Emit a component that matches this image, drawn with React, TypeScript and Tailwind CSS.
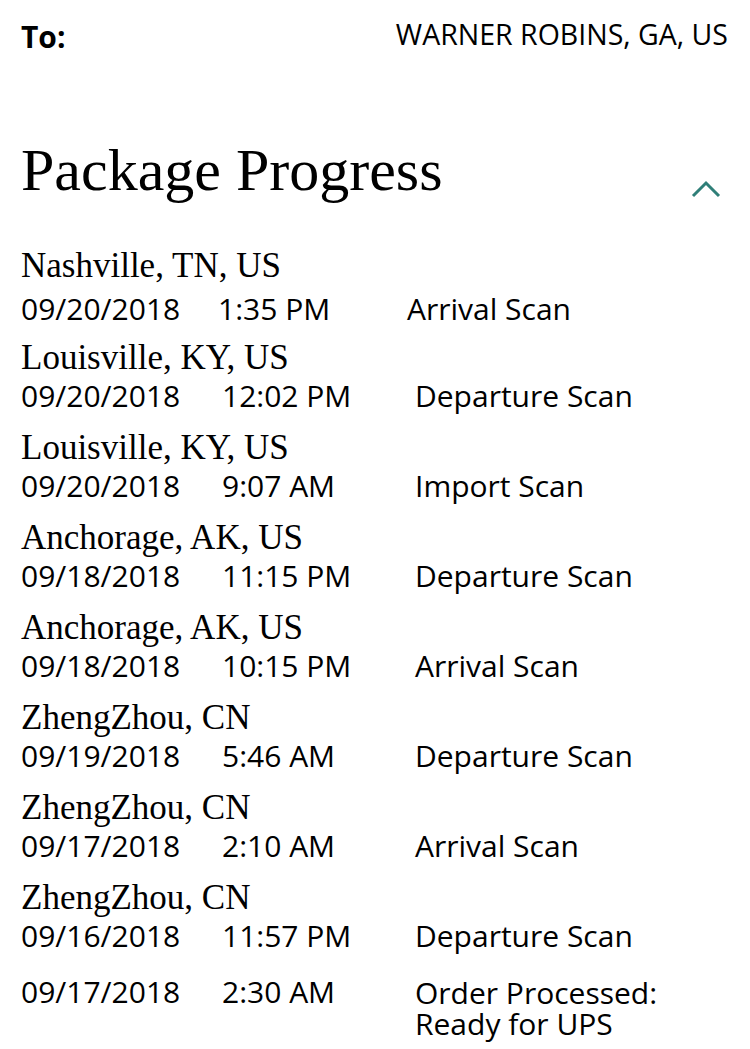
const sans = "font-['Open_Sans','Liberation_Sans',sans-serif]";
const serif = "font-['Liberation_Serif','Times_New_Roman',serif]";

type Scan = {
  place?: string;
  date: string;
  time: string;
  activity: string[];
};

const scans: Scan[] = [
  { place: "Louisville, KY, US", date: "09/20/2018", time: "12:02 PM", activity: ["Departure Scan"] },
  { place: "Louisville, KY, US", date: "09/20/2018", time: "9:07 AM", activity: ["Import Scan"] },
  { place: "Anchorage, AK, US", date: "09/18/2018", time: "11:15 PM", activity: ["Departure Scan"] },
  { place: "Anchorage, AK, US", date: "09/18/2018", time: "10:15 PM", activity: ["Arrival Scan"] },
  { place: "ZhengZhou, CN", date: "09/19/2018", time: "5:46 AM", activity: ["Departure Scan"] },
  { place: "ZhengZhou, CN", date: "09/17/2018", time: "2:10 AM", activity: ["Arrival Scan"] },
  { place: "ZhengZhou, CN", date: "09/16/2018", time: "11:57 PM", activity: ["Departure Scan"] },
];

const ScanRow = ({ scan }: { scan: Scan }) => (
  <div className="h-[90px]">
    <div className={`${serif} text-[35px] leading-[38px] text-black`}>{scan.place}</div>
    <div className={`${sans} grid grid-cols-[201px_193px_1fr] text-[30px] leading-[38px] text-black`}>
      <span>{scan.date}</span>
      <span>{scan.time}</span>
      <span>{scan.activity[0]}</span>
    </div>
  </div>
);

export default function App() {
  return (
    <div className="min-h-[1049px] w-[750px] bg-white px-[21px] text-black">
      <div className={`${sans} flex items-start justify-between pt-[18px] pr-[1px]`}>
        <span className="text-[30px] font-bold leading-[38px]">To:</span>
        <span className="-mt-[3px] text-[28.5px] leading-[38px]">WARNER ROBINS, GA, US</span>
      </div>

      <div className="mt-[78px] flex items-start justify-between">
        <h1 className={`${serif} text-[60px] leading-[72px] font-normal`}>Package Progress</h1>
        <svg className="mt-[46px] mr-[8px]" width="30" height="18" viewBox="0 0 30 18" fill="none">
          <path d="M2 16 L15 3 L28 16" stroke="#2f7f78" strokeWidth="3" />
        </svg>
      </div>

      <div className="mt-[41px]">
        <div className="h-[92px]">
          <div className={`${serif} text-[35px] leading-[38px]`}>Nashville, TN, US</div>
          <div className={`${sans} mt-[5px] grid grid-cols-[197px_189px_1fr] text-[30px] leading-[38px]`}>
            <span>09/20/2018</span>
            <span>1:35 PM</span>
            <span>Arrival Scan</span>
          </div>
        </div>

        {scans.map((s, i) => (
          <ScanRow key={i} scan={s} />
        ))}

        <div className={`${sans} grid grid-cols-[201px_193px_1fr] items-start pt-[4px] text-[30px]`}>
          <span className="leading-[38px]">09/17/2018</span>
          <span className="leading-[38px]">2:30 AM</span>
          <span className="mt-[4px] flex flex-col leading-[31px]">
            <span>Order Processed:</span>
            <span>Ready for UPS</span>
          </span>
        </div>
      </div>
    </div>
  );
}
